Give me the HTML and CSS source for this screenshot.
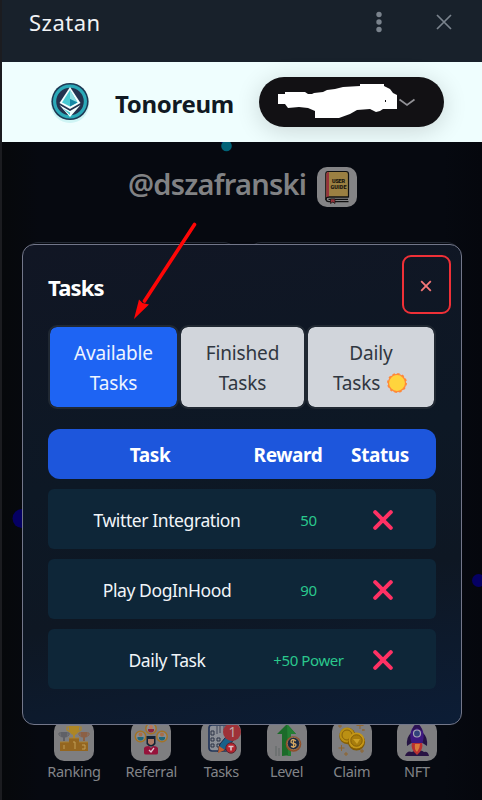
FILE: index.html
```html
<!DOCTYPE html>
<html lang="en">
<head>
<meta charset="utf-8">
<title>Tonoreum</title>
<link rel="stylesheet" href="styles.css">
</head>
<body>
<div class="app">
  <header class="titlebar">
    <span class="titlebar-name">Szatan</span>
    <svg class="dots" width="6" height="22" viewBox="0 0 6 22" fill="#7a838d"><circle cx="3" cy="3.5" r="2.7"/><circle cx="3" cy="11" r="2.7"/><circle cx="3" cy="18.5" r="2.7"/></svg>
    <svg class="close-app" width="16" height="16" viewBox="0 0 16 16" stroke="#7a838d" stroke-width="1.7" fill="none"><path d="M1 1L15 15M15 1L1 15"/></svg>
  </header>

  <section class="brand">
    <svg class="brand-logo" width="42" height="42" viewBox="0 0 42 42">
      <circle cx="21" cy="23" r="19" fill="#b9eeee" opacity=".6"/>
      <circle cx="21" cy="20.5" r="18.6" fill="#1d3a55"/>
      <circle cx="21" cy="20.5" r="15.4" fill="#23334f" stroke="#2ba9b8" stroke-width="3.2"/>
      <path d="M21 6L31.500 22L21 28L10.500 22Z" fill="#f4ffff"/>
      <path d="M21 9L28.500 21.500L21 25.500L13 21.500Z" fill="#49c9d2"/>
      <path d="M21 9L28.500 21.500L21 18Z" fill="#8fe0e4"/>
      <path d="M21 18L28.500 21.500L21 25.500Z" fill="#1687a5"/>
      <path d="M10.500 24L21 30L31.500 24L21 36Z" fill="#f4ffff"/>
      <path d="M14 27.500L21 31.500V34Z" fill="#49c9d2"/>
    </svg>
    <h1 class="brand-name">Tonoreum</h1>
    <button class="wallet">
      <svg width="185" height="50" viewBox="0 0 185 50">
        <path d="M19 17H26V15H46L49 17H53L55 16L64 15L68 13L76 12L84 10L101 9V7H125V9L131 12L134 16L138 18V32H124L121 34L117 35L111 32L98 33L91 37L80 41H56V34L49 31L40 30L29 31L26 27H19Z" fill="#fff"/>
        <path d="M126.500 23v2" stroke="#121114" stroke-width="1"/>
        <path d="M140.500 22.500L148 28L155.500 22.500" fill="none" stroke="#929297" stroke-width="1.700"/>
      </svg>
    </button>
  </section>

  <main class="stage">
    <svg class="particles" width="480" height="658" viewBox="0 0 480 658">
      <path d="M218.500 0h4v4z" fill="#00005c"/>
      <circle cx="224.500" cy="4" r="5.300" fill="#006378"/>
      <circle cx="20" cy="376.500" r="9.500" fill="#050063"/>
      <circle cx="476.500" cy="438.500" r="6.500" fill="#050063"/>
    </svg>
    <div class="profile">
      <span class="handle">@dszafranski</span>
      <svg class="guide" width="40" height="40" viewBox="0 0 40 40">
        <rect width="40" height="40" rx="10" fill="#848486"/>
        <path d="M11 4.500H29Q31.500 4.500 31.500 7V30H12Q9 30 8.800 33V7Q8.800 4.500 11 4.500Z" fill="#9b8042" stroke="#111" stroke-width="1.200"/>
        <path d="M9.300 7Q9.300 5 12 5V30Q9.300 30 9.300 31Z" fill="#96333b"/>
        <path d="M31.500 30H12Q9 30 9 32.300T12 34.600H31.500M11.500 32.300H31" fill="none" stroke="#111" stroke-width="1.200"/>
        <path d="M13.500 32H18V36.500L15.800 35L13.500 36.500Z" fill="#96333b" stroke="#111" stroke-width=".7"/>
        <text x="21.500" y="15.800" class="guide-text" textLength="13">USER</text>
        <text x="21.500" y="21.800" class="guide-text" textLength="16">GUIDE</text>
      </svg>
    </div>
    <div class="hidden-cards"><i></i><i></i></div>

    <nav class="dock">
      <div class="dock-item">
        <svg width="40" height="40" viewBox="0 0 40 40"><rect width="40" height="40" rx="10" fill="#69696b"/>
          <path d="M6 21H15V17H25V21H34V30H6Z" fill="#7b551b"/><path d="M6 21H15M25 21H34M15 17H25" stroke="#8e6c2b"/>
          <path d="M15 5H25V9Q24 13 21 14V17H19V14Q16 13 15 9Z" fill="#907020"/><path d="M15 6H13V9L16 11M25 6H27V9L24 11" fill="none" stroke="#907020" stroke-width="1.200"/>
          <path d="M6.500 11H13.500V14L11 17V20H9V17L6.500 14Z" fill="#4f5055"/><path d="M6.500 12H5V14L8 16M13.500 12H15V14L12 16" fill="none" stroke="#4f5055"/>
          <path d="M26.500 11H33.500V14L31 17V20H29V17L26.500 14Z" fill="#755039"/><path d="M26.500 12H25V14L28 16M33.500 12H35V14L32 16" fill="none" stroke="#755039"/>
          <path d="M10 24v4M19 21h2v7M28 24h3v4h-3" stroke="#a28449" fill="none"/></svg>
        <span>Ranking</span>
      </div>
      <div class="dock-item">
        <svg width="40" height="40" viewBox="0 0 40 40"><rect width="40" height="40" rx="10" fill="#69696b"/>
          <g fill="#737476" stroke="#89601f" stroke-width="1.500"><circle cx="20" cy="7.500" r="5.200"/><circle cx="9.500" cy="15.500" r="5.200"/><circle cx="31" cy="15.500" r="5.200"/></g>
          <circle cx="20" cy="6" r="2" fill="#9b634c"/><path d="M17 8h6v2q-3 3-6 0z" fill="#741f37"/>
          <circle cx="9.500" cy="13.500" r="2" fill="#8b5c3e"/><circle cx="31" cy="13.500" r="2" fill="#8b5c3e"/><path d="M6.500 16h6v2q-3 3-6 0zM28 16h6v2q-3 3-6 0z" fill="#185766"/>
          <path d="M15.500 15H24.500V23Q20 28 15.500 23Z" fill="#101c2b"/><path d="M17 18h6v4q-3 4-6 0z" fill="#916654"/>
          <path d="M13 27Q14 25 18 25L20 27L22 25Q26 25 27 27V32Q27 33.500 25 33.500H15Q13 33.500 13 32Z" fill="#7d0f31"/><path d="M18 29l2 2 3-4" stroke="#b9a1ac" fill="none" stroke-width="1.300"/></svg>
        <span>Referral</span>
      </div>
      <div class="dock-item">
        <svg width="40" height="40" viewBox="0 0 40 40"><rect width="40" height="40" rx="10" fill="#69696b"/>
          <rect x="8" y="4" width="20" height="26" rx="3" fill="#75787f" stroke="#1d2c4a" stroke-width="1.700"/>
          <path d="M10 10h3v4h-3zM10 17h3v3h-3zM10 23h3v3h-3zM16 17h3v3h-3zM16 23h3v3h-3z" fill="none" stroke="#252b3b"/><path d="M16 5v8m3-9v8m4-7v4" stroke="#34394b"/>
          <path d="M19 23L29 11L35 16L24 29L17 31Z" fill="#155173" stroke="#18223b"/><path d="M18 25L24 29L17 32Z" fill="#9e4e29"/>
          <circle cx="30" cy="27" r="5.200" fill="#961f27" stroke="#492029"/><path d="M27.500 25.500h5M30 25.500v4" stroke="#b7a5a8" stroke-width="1.600"/></svg>
        <span>Tasks</span><b class="badge">1</b>
      </div>
      <div class="dock-item">
        <svg width="40" height="40" viewBox="0 0 40 40"><rect width="40" height="40" rx="10" fill="#69696b"/>
          <path d="M20 3L29 13H24V35Q19 34 15 35V13H10Z" fill="#175923"/><path d="M20 3L29 13H24V35H21Z" fill="#1e6a2b"/><path d="M9 25v10M12 27v8" stroke="#515655"/>
          <circle cx="26.500" cy="23" r="7.800" fill="#784222"/><circle cx="26.500" cy="22.500" r="6.200" fill="#182337" stroke="#947045" stroke-width=".7"/><path d="M29 20Q24 17 24 21Q24 22 27 22.500Q30 23 28.500 25Q26 27 24 25M26.500 18v9" fill="none" stroke="#b38d52" stroke-width="1.300"/></svg>
        <span>Level</span>
      </div>
      <div class="dock-item">
        <svg width="40" height="40" viewBox="0 0 40 40"><rect width="40" height="40" rx="10" fill="#69696b"/>
          <circle cx="15.500" cy="15" r="8.300" fill="#705005"/><circle cx="15" cy="14" r="7.500" fill="#9c7810"/><circle cx="15" cy="14" r="5" fill="none" stroke="#735208"/>
          <circle cx="24.500" cy="21" r="8.600" fill="#6d4c03"/><circle cx="24.500" cy="19.500" r="8" fill="#a37d13"/><circle cx="24.500" cy="19.500" r="5.700" fill="#8c680a" stroke="#6f5007"/><path d="M21 18h7l-3 5z" fill="#aa8620"/>
          <path d="M28 1v7m-3.500-3.500h7M9.500 24v6m-3-3h6M14 31v4m-2-2h4M30 28v4m-2-2h4M8 3v4m-2-2h4M31 8v2m-1-1h3" stroke="#795527"/></svg>
        <span>Claim</span>
      </div>
      <div class="dock-item">
        <svg width="40" height="40" viewBox="0 0 40 40"><rect width="40" height="40" rx="10" fill="#69696b"/>
          <path d="M14 12Q9 16 10 25L16 21ZM26 12Q31 16 30 25L24 21Z" fill="#1e1038"/><path d="M20 2Q30 10 25 23H15Q10 10 20 2Z" fill="#34146b"/><path d="M20 2Q25 6 25 10L20 7L15 10Q16 5 20 2Z" fill="#251044"/>
          <circle cx="20" cy="12.500" r="3.500" fill="#293666" stroke="#8b8996" stroke-width="1.200"/>
          <path d="M8 35Q10 29 15 31Q18 29 20 31Q24 28 27 31Q31 30 32 35Z" fill="#211038"/><path d="M15 22H25Q27 28 20 34Q13 28 15 22Z" fill="#9a2828"/><path d="M18 23h5q0 4-3 8q-3-3-2-8z" fill="#b66531"/></svg>
        <span>NFT</span>
      </div>
    </nav>
  </main>

  <div class="modal">
    <div class="modal-head">
      <h2>Tasks</h2>
      <button class="modal-close"><svg width="12" height="12" viewBox="0 0 12 12" stroke="#f87878" stroke-width="1.800"><path d="M1.200 1.200L10.800 10.800M10.800 1.200L1.200 10.800"/></svg></button>
    </div>
    <div class="tabs">
      <button class="tab active">Available<br>Tasks</button>
      <button class="tab">Finished<br>Tasks</button>
      <button class="tab">Daily<br>Tasks <svg class="sun" width="20" height="20" viewBox="0 0 20 20"><circle cx="10" cy="10" r="8.600" fill="#ffd43d" stroke="#ff8938" stroke-width="1.300"/><circle cx="10" cy="10" r="9.100" fill="none" stroke="#ff8938" stroke-width="1.700" stroke-dasharray="2.400 2.365"/></svg></button>
    </div>
    <div class="row head"><span class="c1">Task</span><span class="c2">Reward</span><span class="c3">Status</span></div>
    <div class="row"><span class="c1">Twitter Integration</span><span class="c2">50</span><svg class="c3" width="20" height="20" viewBox="0 0 20 20"><path d="M2.200 2.200L17.800 17.800M17.800 2.200L2.200 17.800"/></svg></div>
    <div class="row"><span class="c1">Play DogInHood</span><span class="c2">90</span><svg class="c3" width="20" height="20" viewBox="0 0 20 20"><path d="M2.200 2.200L17.800 17.800M17.800 2.200L2.200 17.800"/></svg></div>
    <div class="row"><span class="c1">Daily Task</span><span class="c2">+50 Power</span><svg class="c3" width="20" height="20" viewBox="0 0 20 20"><path d="M2.200 2.200L17.800 17.800M17.800 2.200L2.200 17.800"/></svg></div>
  </div>

  <svg class="arrow" width="70" height="102" viewBox="0 0 70 102"><path d="M63.500 3.500L13.500 80" stroke="#fe0606" stroke-width="3.600" stroke-linecap="round"/><path d="M3 98L8 78.500L11.500 82L18 83.500Z" fill="#fe0606"/></svg>
</div>
</body>
</html>
```
FILE: styles.css
```css
* { box-sizing: border-box; }
body { margin: 0; background: #060910; font-family: "Noto Sans", "Open Sans", sans-serif; }
button { font: inherit; border: 0; padding: 0; }
h1, h2 { margin: 0; }
svg { display: block; flex: none; }
.app { position: relative; width: 482px; height: 800px; overflow: hidden; display: flex; flex-direction: column; border-left: 2px solid #1b1c20; }

.titlebar { height: 62px; flex: none; background: #18212b; display: flex; align-items: flex-start; padding: 0 30px 0 27px; }
.titlebar-name { color: #f1f3f5; font-size: 22px; line-height: 30px; padding-top: 7px; letter-spacing: .5px; }
.dots { margin: 11px 54px 0 auto; }
.close-app { margin-top: 14px; }

.brand { height: 80px; flex: none; background: #effefe; display: flex; align-items: center; padding-left: 47px; }
.brand-name { margin-left: 24px; width: 144px; font-size: 24px; line-height: 36px; padding-top: 4px; color: #101923; letter-spacing: -.3px; }
.wallet { width: 185px; height: 50px; border-radius: 25px; background: #121114; box-shadow: 0 4px 24px rgba(0, 0, 0, .16); }

.stage { position: relative; flex: 1; display: flex; flex-direction: column; background: linear-gradient(90deg, #06080b, #060910 8%, #060910 92%, #05070d); }
.particles { position: absolute; inset: 0; }
.profile { display: flex; align-items: center; padding: 25px 0 0 126px; height: 65px; }
.handle { width: 189px; color: #818284; font-size: 29px; font-weight: 600; line-height: 40px; letter-spacing: -.75px; white-space: nowrap; padding-bottom: 6px; }
.guide-text { font: 900 5.5px Roboto, sans-serif; text-anchor: middle; fill: #15120c; }
.hidden-cards { display: grid; grid-template-columns: 210px 210px; gap: 13px; margin: 35px 0 0 24px; }
.hidden-cards i { height: 60px; border-radius: 12px; border-top: 1px solid #242a35; }
.dock { position: relative; margin: auto 0 19px 45px; display: grid; grid-template-columns: 54px 50px repeat(4, 40px); gap: 25.2px; }
.dock-item { position: relative; display: flex; flex-direction: column; align-items: center; color: #828488; font-size: 14.5px; line-height: 20px; letter-spacing: -.3px; white-space: nowrap; }
.dock-item svg { filter: brightness(1.2); }
.badge { position: absolute; top: 2px; right: 0; width: 18px; height: 18px; border-radius: 50%; background: #9e3238; color: #bbaaac; font-size: 14px; line-height: 18px; text-align: center; font-weight: 400; }

.modal { position: absolute; left: 20px; top: 244px; width: 440px; height: 481px; border: 1px solid #73778a; border-radius: 12px; padding: 10px 25px; background: linear-gradient(170deg, #111624 0%, #0d1825 45%, #0e1723 70%, #0c1d36 100%); }
.modal-head { height: 59px; display: flex; justify-content: space-between; margin-right: -15px; }
.modal-head h2 { color: #fff; font-size: 22px; line-height: 30px; padding-top: 17px; letter-spacing: -.8px; }
.modal-close { width: 49px; height: 59px; border: 2px solid #ef3037; border-radius: 9px; background: transparent; display: grid; place-items: center; padding: 3px 1px 0 0; }
.tabs { display: grid; grid-template-columns: 131px 127px 130px; margin-top: 11px; }
.tab { height: 84px; border: 2px solid #202832; border-radius: 9px; background: #d1d5db; background-clip: padding-box; color: #303741; font-size: 19px; line-height: 30px; text-align: center; letter-spacing: -.15px; padding-top: 1px; }
.tab.active { background-color: #1e64f3; color: #eef4ff; }
.sun { display: inline-block; margin: 0 2px; vertical-align: -3px; }
.row { display: grid; grid-template-columns: 204px 72px 112px; align-items: center; height: 60px; margin-top: 10px; padding-top: 2px; border-radius: 6px; background: #0e2638; color: #f1f5f8; font-size: 17.5px; letter-spacing: -.4px; white-space: nowrap; }
.row span { text-align: center; }
.row .c1 { padding-left: 34px; }
.row .c2 { font-size: 15px; color: #2ac88d; padding-left: 41px; display: flex; justify-content: center; }
.row .c3 { margin-left: 49px; }
.row svg { fill: none; stroke: #ff3164; stroke-width: 4; stroke-linecap: round; }
.row.head { height: 50px; margin-top: 20px; border-radius: 12px; background: #1d56dc; color: #fff; font-size: 19px; font-weight: 700; }
.row.head .c1 { padding-left: 0; }
.row.head .c2 { color: #fff; font-size: 19px; padding-left: 0; }
.row.head .c3 { margin-left: 0; }
.arrow { position: absolute; left: 129px; top: 221px; }
```
